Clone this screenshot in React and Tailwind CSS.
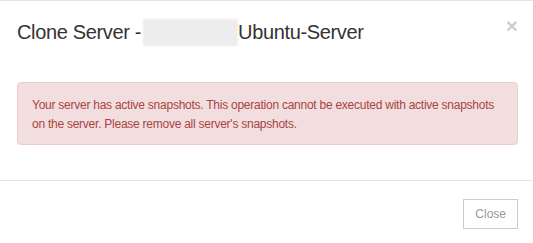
export default function App() {
  return (
    <div className="w-[533px] h-[243px] bg-white border-t border-[#e5e5e5] relative" style={{ fontFamily: '"Liberation Sans", Arial, sans-serif' }}>
      <div className="h-[70px] px-[17px] pt-[16px] flex items-start relative">
        <h4 className="text-[20px] leading-[30px] tracking-[-0.35px] text-[#333] flex items-center">
          <span>Clone Server -</span>
          <span className="inline-block w-[95px] h-[27px] bg-[#ededed] blur-[1px] ml-[2px]"></span>
          <span>Ubuntu-Server</span>
        </h4>
        <button className="absolute right-[15px] top-[14px] text-[21px] font-bold leading-none text-[#000] opacity-20">×</button>
      </div>
      <div className="pl-[17px] pr-[15px] pt-[11px] pb-[35px]">
        <div className="border border-[#ebccd1] bg-[#f2dede] rounded-[4px] px-[14px] pt-[13px] pb-[10px] text-[#a94442] text-[12px] leading-[19px] tracking-[-0.25px]">
          Your server has active snapshots. This operation cannot be executed with active snapshots on the server. Please remove all server's snapshots.
        </div>
      </div>
      <div className="border-t border-[#e5e5e5] px-[15px] pt-[18px] flex justify-end">
        <button className="border border-[#ccc] bg-white text-[#999] text-[12px] leading-[18px] px-[11px] py-[5px]">Close</button>
      </div>
    </div>
  );
}
